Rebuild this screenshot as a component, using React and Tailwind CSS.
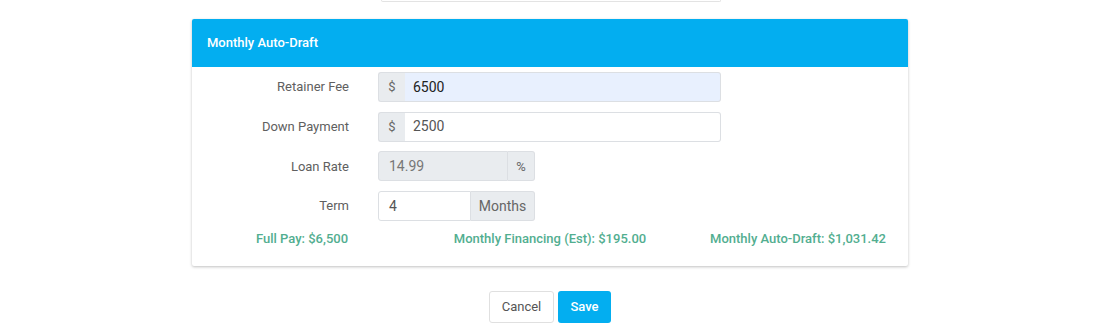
import React from "react";

const FONT = { fontFamily: "Roboto, 'Noto Sans', sans-serif" };

function Addon({ children, side = "left", className = "" }) {
  return (
    <span
      className={`flex items-center justify-center bg-[#e9ecef] border border-[#dcdfe3] text-[#666] text-[13px] ${
        side === "left" ? "rounded-l-[3px] border-r-0" : "rounded-r-[3px] border-l-0"
      } ${className}`}
    >
      {children}
    </span>
  );
}

function Row({ label, children }) {
  return (
    <div className="flex items-center h-[30px]">
      <label className="w-[157px] text-right text-[13px] text-[#606060]">{label}</label>
      <div className="ml-[29px] flex h-full">{children}</div>
    </div>
  );
}

export default function App() {
  return (
    <div className="min-h-[333px] bg-white" style={FONT}>
      {/* input above, scrolled off */}
      <div className="ml-[381px] w-[340px] h-[2px] border-b border-x border-[#e3e3e3] rounded-b-[3px]" />

      <div className="ml-[192px] w-[716px] mt-[17px] bg-white shadow-[0_1px_3px_rgba(0,0,0,0.25)] rounded-[2px]">
        <div className="h-[48px] bg-[#03aef0] flex items-center px-[15px] rounded-t-[2px]">
          <span className="text-white text-[13px] font-medium">Monthly Auto-Draft</span>
        </div>

        <div className="pt-[5px] flex flex-col gap-[9.7px]">
          <Row label="Retainer Fee">
            <Addon className="w-[27px]">$</Addon>
            <div className="w-[316px] bg-[#e8f0fe] border border-[#dcdfe3] border-l-0 rounded-r-[3px] flex items-center pl-[8px] text-[14px] text-[#222]">
              6500
            </div>
          </Row>
          <Row label="Down Payment">
            <Addon className="w-[27px]">$</Addon>
            <div className="w-[316px] bg-white border border-[#dcdfe3] border-l-0 rounded-r-[3px] flex items-center pl-[8px] text-[14px] text-[#555]">
              2500
            </div>
          </Row>
          <Row label="Loan Rate">
            <div className="w-[130px] bg-[#e9ecef] border border-[#dcdfe3] rounded-l-[3px] flex items-center pl-[10px] text-[14px] text-[#777]">
              14.99
            </div>
            <Addon side="right" className="w-[27px] border-l border-l-[#dcdfe3]">%</Addon>
          </Row>
          <Row label="Term">
            <div className="w-[93px] bg-white border border-[#dcdfe3] rounded-l-[3px] flex items-center pl-[10px] text-[14px] text-[#555]">
              4
            </div>
            <Addon side="right" className="w-[64px] text-[14px]">Months</Addon>
          </Row>
        </div>

        <div className="flex justify-center mt-[10px] pb-[19px] text-[13px] font-medium text-[#52ae90] leading-[16px]">
          <div className="w-[248px] shrink-0 text-center">Full Pay: $6,500</div>
          <div className="w-[248px] shrink-0 text-center">Monthly Financing (Est): $195.00</div>
          <div className="w-[248px] shrink-0 text-center">Monthly Auto-Draft: $1,031.42</div>
        </div>
      </div>

      <div className="mt-[25px] ml-[489px] flex gap-[4px]">
        <button className="w-[65px] h-[32px] border border-[#e0e0e0] rounded-[3px] bg-white text-[13px] text-[#555]">
          Cancel
        </button>
        <button className="w-[53px] h-[32px] rounded-[3px] bg-[#03aef0] text-[13px] font-medium text-white">
          Save
        </button>
      </div>
    </div>
  );
}
